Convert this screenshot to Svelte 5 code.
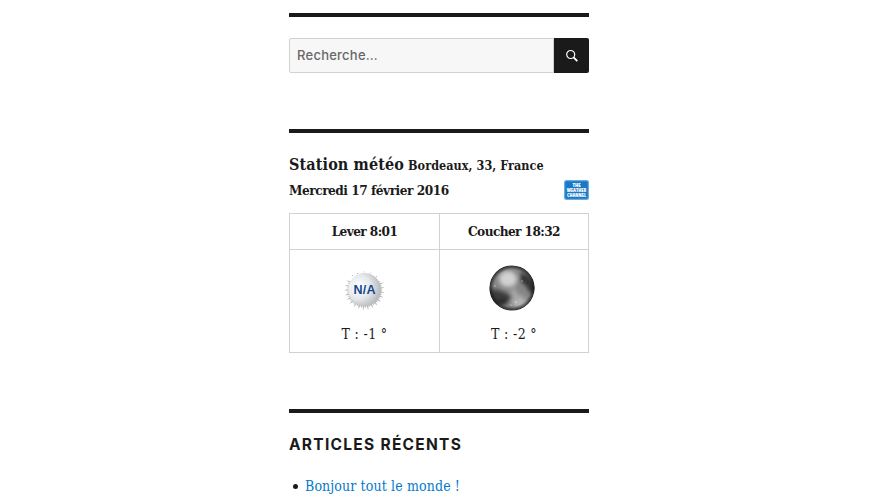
<script>
  const rays = Array.from({ length: 34 }, (_, i) => {
    const a = -0.5 + (i * (Math.PI + 1)) / 33;
    const r = i % 2 ? 20.5 : 18.2;
    const p = (angle, radius) => `${20.5 + Math.cos(angle) * radius},${19 + Math.sin(angle) * radius}`;
    return `${p(a - 0.08, 15)} ${p(a, r)} ${p(a + 0.08, 15)}`;
  });
</script>

<main>
  <section>
    <form class="search">
      <input aria-label="Recherche" placeholder="Recherche…" />
      <button type="button" aria-label="Rechercher">
        <svg width="14" height="14" viewBox="0 0 14 14" fill="none" stroke="#fff">
          <circle cx="5.7" cy="5.5" r="4" stroke-width="1.2" />
          <path d="M8.6 8.4l3.7 3.7" stroke-width="1.8" />
        </svg>
      </button>
    </form>
  </section>

  <section class="weather">
    <div class="place"><span class="name">Station météo</span><span class="city">Bordeaux, 33, France</span></div>
    <div class="date">
      <span class="day">Mercredi 17 février 2016</span>
      <svg width="25" height="20" viewBox="0 0 25 20">
        <rect width="25" height="20" rx="2.5" fill="#68aee0" />
        <rect x="1.2" y="1.2" width="22.6" height="17.6" rx="1" fill="#1b78c4" />
        <g fill="#fff" font-family="'Open Sans', sans-serif" font-weight="800" font-size="5.2" text-anchor="middle">
          <text x="12.5" y="6.8" textLength="8" lengthAdjust="spacingAndGlyphs">THE</text>
          <text x="12.5" y="12" textLength="19.5" lengthAdjust="spacingAndGlyphs">WEATHER</text>
          <text x="12.5" y="17.2" textLength="19" lengthAdjust="spacingAndGlyphs">CHANNEL</text>
        </g>
      </svg>
    </div>
    <div class="table">
      <div class="cell head"><span>Lever 8:01</span></div>
      <div class="cell head"><span>Coucher 18:32</span></div>
      <div class="cell">
        <svg class="sun" width="41" height="40" viewBox="0 0 41 40">
          <defs>
            <radialGradient id="sun" cx=".32" cy=".42" r=".72">
              <stop offset="0" stop-color="#fff" />
              <stop offset=".5" stop-color="#e5e9ec" />
              <stop offset="1" stop-color="#b1b3b5" />
            </radialGradient>
          </defs>
          {#each rays as points}<polygon {points} fill="#b8b8b8" />{/each}
          <circle cx="20.5" cy="18.5" r="16.5" fill="url(#sun)" />
          <path d="M8 4l1 1M13 2l1 1M20 .5v1M27 1.5l-1 1M33 5l-1 1" stroke="#bbb" />
          <text x="20.5" y="22.5" text-anchor="middle" font-family="'Liberation Sans', sans-serif" font-weight="700" font-size="12.5" textLength="22" fill="#15488c">N/A</text>
        </svg>
        <span class="temp">T : -1 °</span>
      </div>
      <div class="cell">
        <svg class="moon" width="46" height="46" viewBox="0 0 46 46">
          <defs>
            <clipPath id="disc"><circle cx="23" cy="23" r="22.6" /></clipPath>
            <radialGradient id="shade"><stop offset=".8" stop-color="#111" stop-opacity="0" /><stop offset="1" stop-color="#111" stop-opacity=".8" /></radialGradient>
            <filter id="soft" x="-50%" y="-50%" width="200%" height="200%"><feGaussianBlur stdDeviation="2.2" /></filter>
          </defs>
          <g clip-path="url(#disc)">
            <rect width="46" height="46" fill="#858585" />
            <g filter="url(#soft)">
              <ellipse cx="19" cy="14" rx="9" ry="8" fill="#d2d2d2" />
              <ellipse cx="28" cy="31" rx="8" ry="9" fill="#a8a8a8" />
              <path d="M0 24l9 1 8 3 6 2 -1 5-7 5-9 0-8-8z" fill="#3a3a3a" />
              <path d="M32 7l6 3 8 8 2 10-7 0-4-7-6-5z" fill="#333" />
              <path d="M27 16l6 6 4 9-6 0-5-6z" fill="#858585" />
              <ellipse cx="32" cy="39" rx="9" ry="4" fill="#b5b5b5" />
              <ellipse cx="13" cy="37" rx="5" ry="2" fill="#181818" />
            </g>
            <g fill="#ddd" opacity=".65"><circle cx="27" cy="37" r="1" /><circle cx="33" cy="16" r=".8" /><circle cx="22" cy="40" r=".7" /><circle cx="31" cy="35" r=".7" /><circle cx="6" cy="21" r=".8" /></g>
            <circle cx="23" cy="23" r="22.6" fill="url(#shade)" />
          </g>
        </svg>
        <span class="temp">T : -2 °</span>
      </div>
    </div>
  </section>

  <section class="recent">
    <h2>Articles récents</h2>
    <ul><li><a href="#bonjour">Bonjour tout le monde !</a></li></ul>
  </section>
</main>

<style>
  :global(body) { background: #fff; overflow: hidden; }
  main {
    width: 300px;
    margin-left: 289px;
    padding-top: 13px;
    color: #1a1a1a;
    font-family: "DejaVu Serif Condensed", "DejaVu Serif", serif;
    font-stretch: condensed;
    font-size: 14px;
    white-space: nowrap;
  }
  section { border-top: 4px solid #1a1a1a; padding-top: 21px; margin-bottom: 56px; }
  .search { display: flex; height: 35px; margin: 0; }
  input {
    box-sizing: border-box; width: 265px; height: 35px; padding: 0 7px 2px;
    border: 1px solid #d1d1d1; border-radius: 2px 0 0 2px;
    background: #f7f7f7; font: 500 13px Inter, sans-serif; letter-spacing: .25px;
  }
  input::placeholder { color: #686868; opacity: 1; }
  button {
    display: grid; place-items: center; width: 35px; height: 35px; padding: 0;
    border: 0; border-radius: 0 2px 2px 0; background: #1a1a1a;
  }
  svg { display: block; flex: none; letter-spacing: 0; }
  .weather { padding-top: 19px; font-weight: 700; }
  .place { display: flex; align-items: baseline; gap: 4px; height: 25px; line-height: 26px; }
  .name { font-size: 16px; letter-spacing: .13px; }
  .city { font-size: 12.5px; letter-spacing: .05px; }
  .date { display: flex; justify-content: space-between; height: 36px; line-height: 26px; font-size: 13.5px; letter-spacing: -.46px; }
  .date svg { margin-top: 3px; }
  .table {
    display: grid; grid-template-columns: 150px 149px; grid-template-rows: 36px 103px;
    border: 1px solid #d1d1d1; border-width: 1px 0 0 1px; box-sizing: border-box; width: 300px; height: 140px;
  }
  .cell {
    display: flex; flex-direction: column; align-items: center; box-sizing: border-box;
    border: 1px solid #d1d1d1; border-width: 0 1px 1px 0; font-weight: 400;
  }
  .head { line-height: 34px; font-weight: 700; font-size: 13.5px; letter-spacing: -.58px; }
  .sun { margin: 21px 1px 0 0; }
  .moon { margin: 15px 4px 0 0; }
  .temp { margin-top: auto; height: 30px; line-height: 25px; letter-spacing: .35px; }
  .recent { margin-bottom: 0; }
  h2 { margin: 0; font: 700 15.5px/21px Inter, sans-serif; letter-spacing: 1.28px; text-transform: uppercase; }
  ul { margin: 19px 0 0; padding: 0 0 0 16px; line-height: 24px; list-style: none; }
  li { display: flex; align-items: center; }
  li::before { content: ""; width: 5px; height: 5px; margin: 1px 7px 0 -12px; border-radius: 50%; background: #1a1a1a; }
  a { color: #007acc; text-decoration: none; letter-spacing: .13px; }
</style>
